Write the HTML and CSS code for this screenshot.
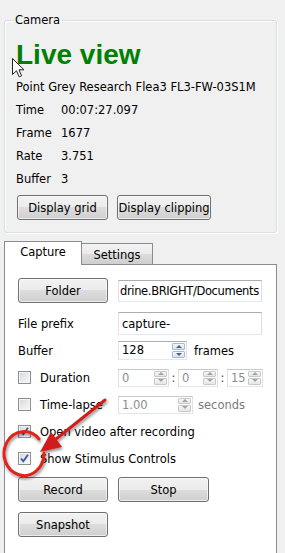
FILE: index.html
```html
<!DOCTYPE html>
<html lang="en">
<head>
  <meta charset="UTF-8" />
  <meta name="viewport" content="width=device-width, initial-scale=1" />
  <title>Camera capture</title>
  <link rel="stylesheet" href="styles.css">
</head>
<body>

<div class="page">

  <fieldset class="camera">
    <legend>Camera</legend>
    <div class="live">Live view</div>
    <div class="info">
      <div class="line">Point Grey Research Flea3 FL3-FW-03S1M</div>
      <div class="line"><span class="key">Time</span><span>00:07:27.097</span></div>
      <div class="line"><span class="key">Frame</span><span>1677</span></div>
      <div class="line"><span class="key">Rate</span><span>3.751</span></div>
      <div class="line"><span class="key">Buffer</span><span>3</span></div>
    </div>
    <div class="cam-btns">
      <button class="btn btn-grid">Display grid</button>
      <button class="btn btn-clip">Display clipping</button>
    </div>
  </fieldset>

  <div class="tabs">
    <div class="tabbar">
      <div class="tab active">Capture</div>
      <div class="tab">Settings</div>
    </div>
    <div class="pane">

      <div class="row row-folder">
        <button class="btn btn-wide">Folder</button>
        <div class="field field-folder"><span class="path">drine.BRIGHT/Documents</span></div>
      </div>

      <div class="row">
        <span class="lbl">File prefix</span>
        <div class="field field-prefix"><span>capture-</span></div>
      </div>

      <div class="row">
        <span class="lbl">Buffer</span>
        <div class="spin spin-buf">
          <span class="val">128</span>
          <span class="arrows"><i class="up"></i><i class="dn"></i></span>
        </div>
        <span class="unit">frames</span>
      </div>

      <div class="row">
        <span class="lbl lbl-check"><span class="check"></span>Duration</span>
        <div class="spin off spin-h">
          <span class="val">0</span>
          <span class="arrows"><i class="up"></i><i class="dn"></i></span>
        </div>
        <span class="colon">:</span>
        <div class="spin off spin-m">
          <span class="val">0</span>
          <span class="arrows"><i class="up"></i><i class="dn"></i></span>
        </div>
        <span class="colon">:</span>
        <div class="spin off spin-s">
          <span class="val">15</span>
          <span class="arrows"><i class="up"></i><i class="dn"></i></span>
        </div>
      </div>

      <div class="row">
        <span class="lbl lbl-check"><span class="check"></span>Time-lapse</span>
        <div class="spin off spin-lapse">
          <span class="val">1.00</span>
          <span class="arrows"><i class="up"></i><i class="dn"></i></span>
        </div>
        <span class="unit muted">seconds</span>
      </div>

      <div class="row">
        <span class="lbl-check"><span class="check on"><svg viewBox="0 0 11 11"><path d="M2 5.5 L4.3 8.3 L9 1.8" /></svg></span>Open video after recording</span>
      </div>

      <div class="row">
        <span class="lbl-check"><span class="check on"><svg viewBox="0 0 11 11"><path d="M2 5.5 L4.3 8.3 L9 1.8" /></svg></span>Show Stimulus Controls</span>
      </div>

      <div class="btn-row">
        <button class="btn btn-wide">Record</button>
        <button class="btn btn-stop">Stop</button>
      </div>
      <div class="btn-row snap">
        <button class="btn btn-wide">Snapshot</button>
      </div>

    </div>
  </div>

  <!-- mouse pointer left on the live view -->
  <svg class="cursor" viewBox="0 0 13 20">
    <path d="M0.5 0.5 L0.5 16.5 L4.5 12.8 L7.2 18.8 L9.6 17.8 L7 11.8 L12 11.8 Z" />
  </svg>

  <!-- red annotation -->
  <svg class="annot" viewBox="0 0 285 553">
    <defs>
      <filter id="shadow" x="-20%" y="-20%" width="140%" height="140%">
        <feGaussianBlur in="SourceAlpha" stdDeviation="1.6" />
        <feOffset dx="1" dy="2" result="blur" />
        <feComponentTransfer><feFuncA type="linear" slope="0.45" /></feComponentTransfer>
        <feMerge><feMergeNode /><feMergeNode in="SourceGraphic" /></feMerge>
      </filter>
    </defs>
    <g filter="url(#shadow)">
      <line x1="105" y1="400" x2="56" y2="439" stroke="#d01f1a" stroke-width="3" stroke-linecap="round" />
      <polygon points="40,452 51,432 62,447" fill="#d01f1a" />
      <path d="M39 439 A20 22 0 1 0 44 453" fill="none" stroke="#e3211b" stroke-width="3" stroke-linecap="round" />
    </g>
  </svg>

</div>

</body>
</html>
```

FILE: styles.css
```css
body {
  margin: 0;
  background: #f0f0f0;
  font-family: "DejaVu Sans", sans-serif;
  font-size: 11.5px;
  color: #000;
}
.page {
  position: relative;
  height: 553px;
  overflow: hidden;
  padding-top: 13px;
  box-sizing: border-box;
}

/* camera group box */
.camera {
  margin: 0 8px 0 4px;
  padding: 12px 11px;
  min-width: 0;
  border: 1px solid #d5dfe5;
  border-radius: 3px;
  box-shadow: inset 1px 1px 0 #fff, 1px 1px 0 #fff;
}
.camera legend {
  margin-left: -3px;
  padding: 0 2px;
  line-height: 14px;
}
.live {
  font-family: "Liberation Sans", Arial, sans-serif;
  font-weight: bold;
  font-size: 28px;
  line-height: 32px;
  color: #008000;
  margin: 0 0 5px 0;
}
.line {
  height: 23px;
  line-height: 23px;
  white-space: nowrap;
}
.key {
  display: inline-block;
  width: 45px;
}
.cam-btns {
  display: flex;
  gap: 9px;
  margin: 4px 0 0 1px;
}

/* buttons */
.btn {
  height: 25px;
  padding: 0;
  font: inherit;
  color: #000;
  border: 1px solid #707070;
  border-radius: 3px;
  background: linear-gradient(#f2f2f2 0%, #ebebeb 50%, #dddddd 50%, #cfcfcf 100%);
  box-shadow: inset 0 0 0 1px rgba(255,255,255,0.6);
}
.btn-grid { width: 91px; }
.btn-clip { width: 94px; }
.btn-wide { width: 90px; }
.btn-stop { width: 91px; }

/* tabs */
.tabs {
  margin: 8px 8px 0 4px;
}
.tabbar {
  display: flex;
  align-items: flex-end;
}
.tab {
  border: 1px solid #898c95;
  border-bottom: none;
  box-sizing: border-box;
  text-align: center;
}
.tab.active {
  position: relative;
  z-index: 1;
  width: 78px;
  height: 24px;
  line-height: 21px;
  margin-bottom: -1px;
  background: #fff;
}
.tab:not(.active) {
  width: 71px;
  height: 21px;
  padding-top: 2px;
  line-height: 18px;
  border-left: none;
  background: linear-gradient(#f3f3f3 0%, #ebebeb 50%, #dddddd 50%, #cfcfcf 100%);
}
.pane {
  height: 400px;
  padding: 13px 13px 0;
  border: 1px solid #898c95;
  background: #fff;
}

/* form rows */
.row {
  display: flex;
  align-items: center;
  height: 27px;
  white-space: nowrap;
}
.row-folder {
  height: 25px;
  align-items: flex-start;
  margin-bottom: 7px;
}
.lbl {
  width: 100px;
  flex: none;
}
.lbl-check {
  display: flex;
  align-items: center;
}
.field {
  display: flex;
  align-items: center;
  box-sizing: border-box;
  overflow: hidden;
  padding: 0 3px;
  background: #fff;
  border: 1px solid;
  border-color: #abadb3 #dbdfe6 #e3e9ef #e2e3ea;
}
.field-folder {
  width: 144px;
  height: 22px;
  margin: 2px 0 0 10px;
  padding: 0 2px 0 1px;
}
.path {
  letter-spacing: -0.35px;
}
.field-prefix {
  width: 144px;
  height: 23px;
}

/* spin boxes */
.spin {
  display: flex;
  align-items: stretch;
  box-sizing: border-box;
  height: 19px;
  background: #fff;
  border: 1px solid;
  border-color: #abadb3 #dbdfe6 #e3e9ef #e2e3ea;
}
.spin .val {
  flex: 1;
  padding-left: 3px;
  line-height: 17px;
}
.arrows {
  display: flex;
  flex-direction: column;
  width: 13px;
  margin: 1px;
  gap: 1px;
}
.arrows i {
  position: relative;
  flex: 1;
  border: 1px solid #a9b9cf;
  border-radius: 1px;
  background: linear-gradient(#f4f7fb, #d9e3ef);
}
.arrows i::after {
  content: "";
  position: absolute;
  left: 50%;
  top: 50%;
  margin: -2px 0 0 -3px;
  border-left: 3px solid transparent;
  border-right: 3px solid transparent;
}
.arrows .up::after { border-bottom: 3px solid #4a5f8a; }
.arrows .dn::after { border-top: 3px solid #4a5f8a; }
.spin.off {
  height: 18px;
  border-color: #c5c8cc #dfe1e4 #e3e6e9 #dfe1e4;
  color: #8d8d8d;
}
.spin.off .val { line-height: 16px; }
.spin.off .arrows i {
  border-color: #c9c9c9;
  background: linear-gradient(#f7f7f7, #e6e6e6);
}
.spin.off .arrows .up::after { border-bottom-color: #a3a3a3; }
.spin.off .arrows .dn::after { border-top-color: #a3a3a3; }
.spin-buf { width: 69px; }
.spin-h { width: 51px; }
.spin-m { width: 40px; }
.spin-s { width: 36px; }
.spin-lapse { width: 75px; }
.colon {
  width: 9px;
  text-align: center;
  color: #444;
}
.unit {
  margin-left: 7px;
}
.muted {
  margin-left: 5px;
  color: #7a7a7a;
}

/* check boxes */
.check {
  position: relative;
  width: 13px;
  height: 13px;
  box-sizing: border-box;
  margin-right: 9px;
  border: 1px solid #8e8f8f;
  box-shadow: inset 0 0 0 1px #f4f4f4;
  background: linear-gradient(135deg, #d3d6db, #fbfbfb);
}
.check svg {
  position: absolute;
  left: 0;
  top: 0;
  width: 11px;
  height: 11px;
}
.check path {
  fill: none;
  stroke: #3d5796;
  stroke-width: 1.8;
}

.btn-row {
  display: flex;
  gap: 10px;
  margin-top: 5px;
}
.btn-row.snap {
  margin-top: 10px;
}

/* overlays */
.cursor {
  position: absolute;
  left: 12px;
  top: 58px;
  width: 13px;
  height: 20px;
}
.cursor path {
  fill: #fff;
  stroke: #222;
  stroke-width: 1;
}
.annot {
  position: absolute;
  left: 0;
  top: 0;
  width: 285px;
  height: 553px;
  pointer-events: none;
}
```
